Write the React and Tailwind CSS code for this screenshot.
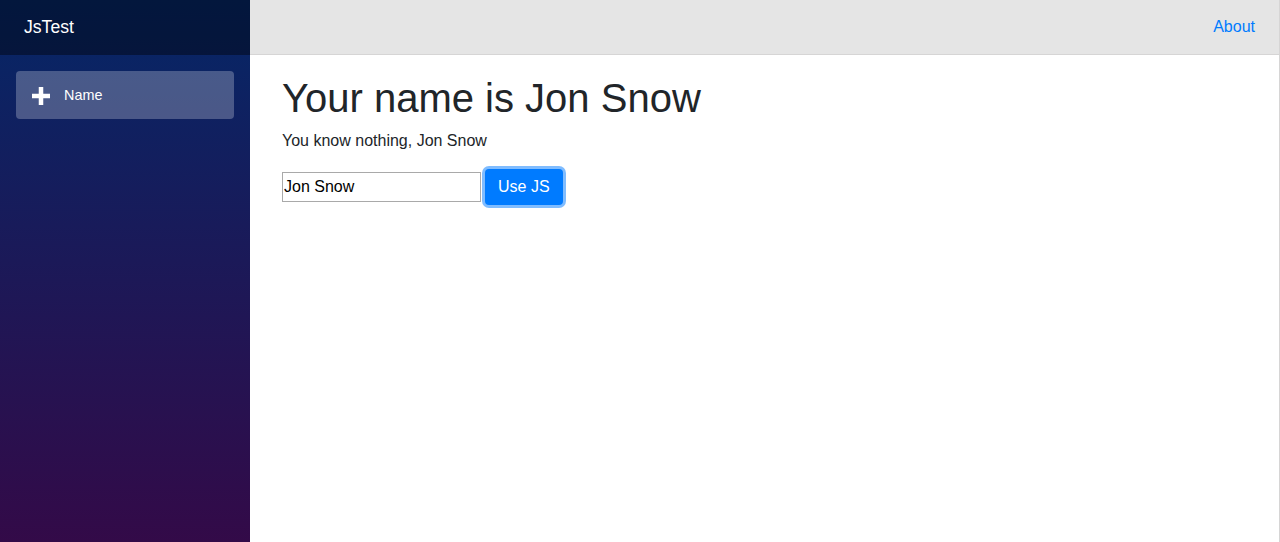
import { useState } from "react";

function PlusIcon() {
    return (
        <svg width="18" height="18" viewBox="0 0 8 8" className="fill-white">
            <path d="M3 0v3H0v2h3v3h2V5h3V3H5V0H3z" />
        </svg>
    );
}

export default function App() {
    const [name, setName] = useState("Jon Snow");

    return (
        <div className="flex h-screen w-full font-['Liberation_Sans',Arial,sans-serif] text-[#212529]">
            <div className="w-[250px] shrink-0 flex flex-col bg-[linear-gradient(180deg,#052767_0%,#330a48_100%)]">
                <div className="h-[55px] shrink-0 flex items-center pl-6 bg-black/40">
                    <span className="text-white text-[17.6px]">JsTest</span>
                </div>
                <div className="px-4 pt-4">
                    <a className="flex items-center h-12 rounded bg-white/25 text-white text-[14.4px] pl-4 pt-[2px]">
                        <span className="w-8 flex items-center">
                            <PlusIcon />
                        </span>
                        Name
                    </a>
                </div>
            </div>

            <div className="flex-1 flex flex-col border-r border-[#d6d5d5]">
                <div className="h-[55px] shrink-0 flex items-center justify-end px-6 bg-[#e5e5e5] border-b border-[#d6d5d5]">
                    <a className="text-[#007bff] text-base">About</a>
                </div>
                <div className="flex-1 px-8 pt-[19px] bg-white">
                    <h1 className="text-[40px] leading-[1.2] mb-[7px]">Your name is {name}</h1>
                    <p className="text-base leading-6 mb-4">You know nothing, {name}</p>
                    <div className="flex items-center gap-[3px]">
                        <input
                            value={name}
                            onChange={(e) => setName(e.target.value)}
                            className="w-[199px] h-[30px] border border-[#a9a9a9] text-base px-[1px] outline-none text-black"
                        />
                        <button className="bg-[#007bff] text-white text-base leading-6 px-[13px] py-[6px] rounded ring-[3px] ring-[#007bff]/50 ml-[1px]">
                            Use JS
                        </button>
                    </div>
                </div>
            </div>
        </div>
    );
}
